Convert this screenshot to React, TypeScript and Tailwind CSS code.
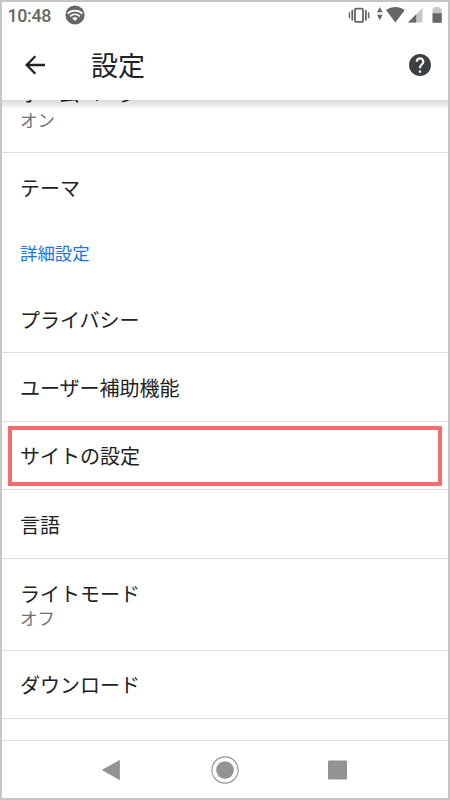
import clsx from "clsx";

type Row = {
  label: string;
  value?: string;
  className: string;
  highlighted?: boolean;
};

const basicRows: Row[] = [{ label: "テーマ", className: "h-[68px] pt-px" }];

const advancedRows: Row[] = [
  { label: "プライバシー", className: "h-[68px] border-b pt-0.5" },
  { label: "ユーザー補助機能", className: "h-[69px] border-b pt-px" },
  { label: "サイトの設定", className: "h-[68px] border-b pt-px", highlighted: true },
  { label: "言語", className: "h-[69px] border-b pt-px" },
  { label: "ライトモード", value: "オフ", className: "h-[92px] border-b pb-px" },
  { label: "ダウンロード", className: "h-[68px] border-b" },
];

function StatusBar() {
  return (
    <div className="flex h-7 shrink-0 items-center justify-between pr-1 pl-[5.5px] text-[#666]">
      <div className="flex items-center">
        <span className="w-[57.5px] font-['Roboto',sans-serif] text-[17.8px] leading-7 font-medium tracking-[-0.3px]">
          10:48
        </span>
        <svg width="20" height="20" viewBox="0 0 20 20" className="-mt-0.5">
          <circle cx="10" cy="10" r="9.6" fill="#666" />
          <g fill="none" stroke="#fff" strokeWidth="1.7">
            <path d="M2.6 8.7c4.2-4.1 10.6-4.1 14.8 0" />
            <path d="M5.2 11.4c2.8-2.6 6.8-2.6 9.6 0" />
          </g>
          <path d="M7.2 13.1c1.7-1.2 3.9-1.2 5.6 0L10 16z" fill="#fff" />
        </svg>
      </div>
      <svg width="98" height="20" viewBox="346 6 98 20" fill="#666">
        <rect x="355" y="8.7" width="8" height="13.2" rx="0.8" fill="none" stroke="#666" strokeWidth="1.8" />
        <path d="M351.4 10h1.8v10.4h-1.8zM348.7 12.2h1.5v6h-1.5zM365 10h1.8v10.4H365zM367.9 12.2h1.5v6h-1.5z" />
        <path d="M379.8 7l2.8 5.2h-5.6zM379.8 20.2l2.8-5.4h-5.6z" />
        <path d="M386 10.1c5.5-4 13.3-4 18.8 0L395.4 22.4z" />
        <path d="M422.5 8v14.5H408z" fill="#c6c6c6" />
        <path d="M416.2 14.3v8.2H408z" />
        <path d="M432.5 8.5h1.8V7h5.2v1.5h2.3V14h-9.3z" fill="#c6c6c6" />
        <path d="M432.5 13.3h9.3v9.5h-9.3z" />
      </svg>
    </div>
  );
}

function AppBar() {
  return (
    <header className="flex h-[70px] shrink-0 items-center bg-white pr-[17px] pl-[23px]">
      <button aria-label="戻る">
        <svg width="21" height="20" viewBox="0 0 21 20" fill="none" stroke="#202124" strokeWidth="2.3">
          <path d="M20 10H2M10.3 1.3 1.7 10l8.6 8.7" />
        </svg>
      </button>
      <h1 className="ml-[45px] grow text-[27px] leading-[40px]">設定</h1>
      <button aria-label="ヘルプ">
        <svg width="22" height="22" viewBox="2 2 20 20" fill="#3c4043">
          <path d="M12 2C6.48 2 2 6.48 2 12s4.48 10 10 10 10-4.48 10-10S17.52 2 12 2zm1 17h-2v-2h2v2zm2.07-7.75-.9.92C13.45 12.9 13 13.5 13 15h-2v-.5c0-1.1.45-2.1 1.17-2.83l1.24-1.26c.37-.36.59-.86.59-1.41 0-1.1-.9-2-2-2s-2 .9-2 2H8c0-2.21 1.79-4 4-4s4 1.79 4 4c0 .88-.36 1.68-.93 2.25z" />
        </svg>
      </button>
    </header>
  );
}

function SettingRow({ label, value, className, highlighted }: Row) {
  return (
    <div
      className={clsx(
        "relative flex shrink-0 flex-col justify-center border-[#dedede] pl-[18px]",
        className
      )}
    >
      <span className="text-[20px] leading-[28px]">{label}</span>
      {value && (
        <span className="-mt-px text-[17.4px] leading-[22px] text-[#6f7276]">{value}</span>
      )}
      {highlighted && (
        <div className="absolute inset-x-[6px] top-[4px] bottom-[3px] border-4 border-[#f56e6e]" />
      )}
    </div>
  );
}

function NavBar() {
  return (
    <nav className="flex h-[58px] shrink-0 items-center justify-center border-t border-[#dedede] bg-white text-[#939393]">
      <svg width="250" height="28" viewBox="100 756 250 28" fill="currentColor">
        <path d="M119.9 760.6v18.8q0 .8-.8.4l-16.4-9.2q-.9-.6 0-1.2l16.4-9.2q.8-.4.8.4z" />
        <circle cx="225" cy="770" r="13.1" fill="none" stroke="currentColor" strokeWidth="1.1" />
        <circle cx="225" cy="770" r="8.8" />
        <rect x="328" y="760.6" width="19" height="18.8" rx="1.2" />
      </svg>
    </nav>
  );
}

export default function App() {
  return (
    <div className="flex h-[800px] w-[450px] flex-col overflow-hidden border-2 border-[#c5c5c5] bg-white font-['Noto_Sans_CJK_JP',sans-serif] text-[#202124]">
      <StatusBar />
      <AppBar />
      <main className="relative flex grow flex-col overflow-hidden">
        <div className="absolute inset-x-0 top-0 h-2.5 bg-gradient-to-b from-black/15 to-transparent" />
        {/* first row is partly scrolled under the app bar */}
        <div className="flex h-[53px] shrink-0 flex-col justify-end border-b border-[#dedede] pb-[21px] pl-[18px]">
          <span className="text-[20px] leading-[30px]">ホームページ</span>
          <span className="text-[17.4px] leading-[22px] text-[#6f7276]">オン</span>
        </div>
        {basicRows.map((row) => (
          <SettingRow key={row.label} {...row} />
        ))}
        <h2 className="flex h-16 shrink-0 items-center pt-px pl-[18px] text-[17.4px] text-[#1a73e8]">
          詳細設定
        </h2>
        {advancedRows.map((row) => (
          <SettingRow key={row.label} {...row} />
        ))}
      </main>
      <NavBar />
    </div>
  );
}
